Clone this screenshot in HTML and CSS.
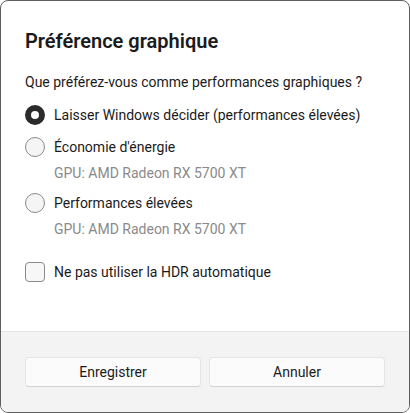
FILE: index.html
```html
<!DOCTYPE html>
<html lang="fr">
<head>
  <meta charset="UTF-8">
  <title>Préférence graphique</title>
  <link rel="stylesheet" href="styles.css">
</head>
<body>
  <div class="dialog">
    <div class="content">
      <h1 class="title">Préférence graphique</h1>
      <p class="question">Que préférez-vous comme performances graphiques ?</p>

      <label class="option">
        <span class="radio checked"></span>
        Laisser Windows décider (performances élevées)
      </label>
      <label class="option">
        <span class="radio"></span>
        Économie d'énergie
      </label>
      <div class="hint">GPU: AMD Radeon RX 5700 XT</div>
      <label class="option option-gap">
        <span class="radio"></span>
        Performances élevées
      </label>
      <div class="hint">GPU: AMD Radeon RX 5700 XT</div>

      <label class="option check-row">
        <span class="checkbox"></span>
        Ne pas utiliser la HDR automatique
      </label>
    </div>

    <div class="footer">
      <button class="btn">Enregistrer</button>
      <button class="btn">Annuler</button>
    </div>
  </div>
</body>
</html>
```

FILE: styles.css
```css
* { margin: 0; padding: 0; box-sizing: border-box; }
body { background: #ffffff; font-family: Roboto, 'Noto Sans', sans-serif; color: #1b1b1b; font-size: 14px; }

.dialog { width: 410px; height: 413px; border: 1px solid #5e5e5e; border-radius: 8px; overflow: hidden; display: flex; flex-direction: column; background: #fff; }
.content { flex: 1; padding: 26px 24px 0 24px; }

.title { font-size: 20px; font-weight: 600; line-height: 28px; }
.question { margin-top: 17px; line-height: 20px; }

.option { display: flex; align-items: center; gap: 9px; height: 32px; }
.option:first-of-type { margin-top: 7px; }
.option-gap { margin-top: 4px; }
.check-row { margin-top: 17px; }

.radio { width: 20px; height: 20px; border-radius: 50%; border: 1px solid #8a8a8a; background: #f5f5f5; flex: none; }
.radio.checked { border: 6px solid #2b2b2b; background: #fff; }
.checkbox { width: 20px; height: 20px; border-radius: 4px; border: 1px solid #8a8a8a; background: #f7f7f7; flex: none; }

.hint { color: #8a8a8a; line-height: 20px; padding-left: 29px; }

.footer { background: #f3f3f3; border-top: 1px solid #e5e5e5; padding: 25px 24px; display: grid; grid-template-columns: 1fr 1fr; gap: 8px; }
.btn { height: 30px; font-family: inherit; font-size: 14px; color: #1b1b1b; background: #fbfbfb; border: 1px solid #e5e5e5; border-bottom-color: #d0d0d0; border-radius: 4px; }
```
